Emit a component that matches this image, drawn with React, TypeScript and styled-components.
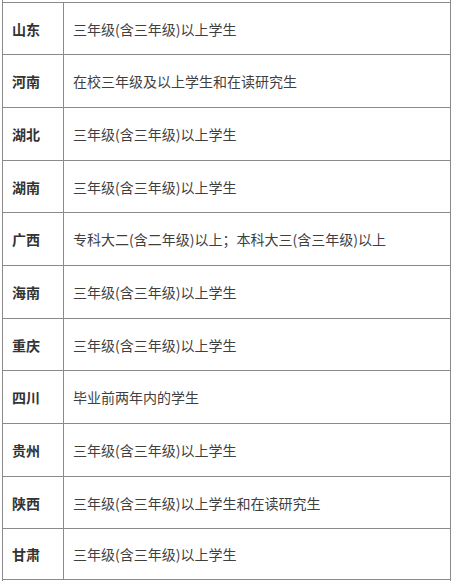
import React from "react";
import styled, { createGlobalStyle } from "styled-components";

const GlobalStyle = createGlobalStyle`
  html, body {
    margin: 0;
    padding: 0;
    background: #ffffff;
  }
  body {
    font-family: "Noto Sans CJK SC", "Noto Sans", sans-serif;
  }
`;

const Page = styled.div`
  width: 453px;
  height: 581px;
  padding-left: 2px;
  box-sizing: border-box;
  overflow: hidden;
`;

const Frame = styled.div`
  width: 449px;
  height: 581px;
  padding-top: 2px;
  box-sizing: border-box;
  border-left: 1px solid #8a8a8a;
  border-right: 1px solid #8a8a8a;
`;

const Row = styled.div<{ $h: number; $last?: boolean }>`
  display: grid;
  grid-template-columns: 61px 1fr;
  height: ${(p) => p.$h}px;
  box-sizing: border-box;
  border-top: 1px solid #8a8a8a;
  border-bottom: ${(p) => (p.$last ? "1px solid #8a8a8a" : "none")};
`;

const Province = styled.div`
  display: flex;
  align-items: center;
  padding-left: 9px;
  border-right: 1px solid #8a8a8a;
  font-size: 14px;
  font-weight: bold;
  color: #333333;
`;

const Rule = styled.div`
  display: flex;
  align-items: center;
  padding-left: 9px;
  font-size: 14px;
  color: #3f3f3f;
  white-space: nowrap;
`;

const rows: [string, string, number][] = [
  ["山东", "三年级(含三年级)以上学生", 52],
  ["河南", "在校三年级及以上学生和在读研究生", 53],
  ["湖北", "三年级(含三年级)以上学生", 53],
  ["湖南", "三年级(含三年级)以上学生", 52],
  ["广西", "专科大二(含二年级)以上；本科大三(含三年级)以上", 53],
  ["海南", "三年级(含三年级)以上学生", 53],
  ["重庆", "三年级(含三年级)以上学生", 52],
  ["四川", "毕业前两年内的学生", 53],
  ["贵州", "三年级(含三年级)以上学生", 53],
  ["陕西", "三年级(含三年级)以上学生和在读研究生", 52],
  ["甘肃", "三年级(含三年级)以上学生", 52],
];

const App = () => {
  return (
    <Page>
      <GlobalStyle />
      <Frame>
        {rows.map(([name, rule, h], i) => (
          <Row key={name} $h={h} $last={i === rows.length - 1}>
            <Province>{name}</Province>
            <Rule>{rule}</Rule>
          </Row>
        ))}
      </Frame>
    </Page>
  );
};

export default App;
